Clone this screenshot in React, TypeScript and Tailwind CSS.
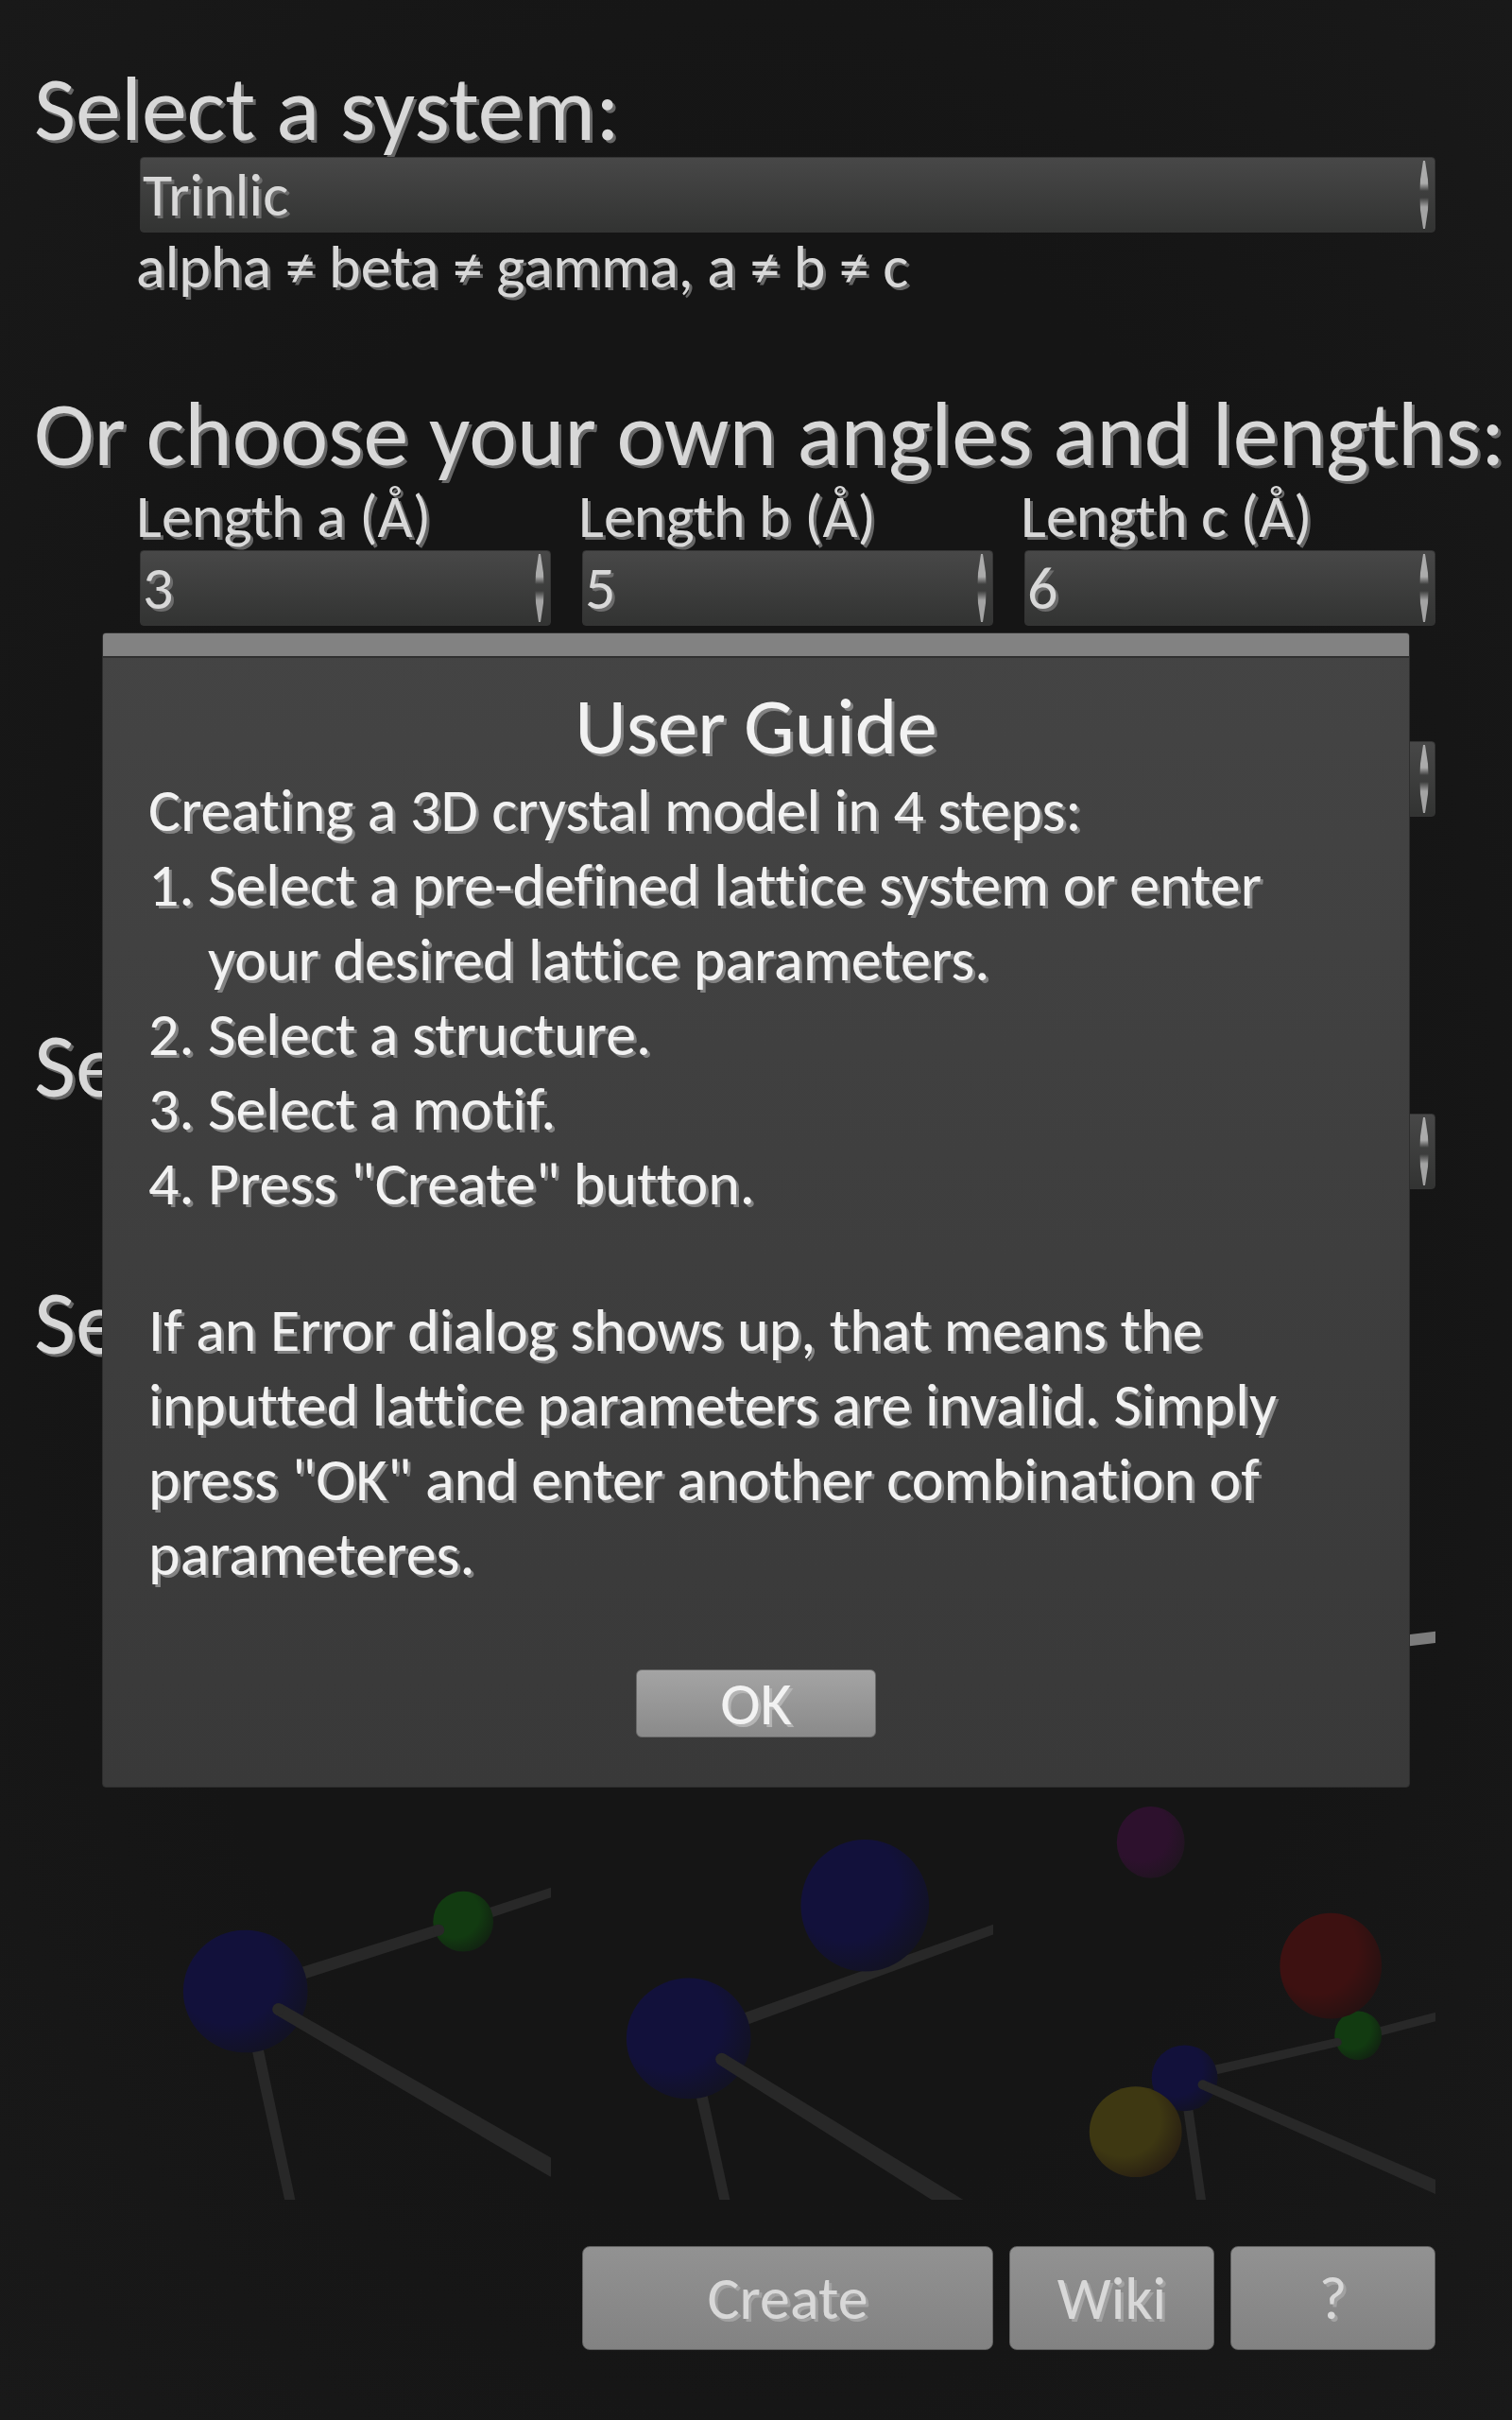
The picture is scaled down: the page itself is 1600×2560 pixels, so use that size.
import type { ReactNode } from 'react'

type Atom = { x: number; y: number; rx: number; ry: number; color: string }
// x, y and thickness at both ends
type Rod = [number, number, number, number, number, number]
type Layer = { atom: Atom } | { rod: Rod; cap?: 'start' | 'end' }

const DIM: Record<string, [string, string]> = {
  blue: ['#12113b', '#121224'],
  green: ['#123b11', '#112411'],
  red: ['#3d1111', '#271111'],
  yellow: ['#3e3812', '#2a2112'],
  purple: ['#2d112d', '#211421'],
}

const BRIGHT: Record<string, [string, string]> = {
  blue: ['#3735b4', '#33336a'],
  green: ['#35b433', '#336a33'],
  red: ['#b93333', '#743333'],
  yellow: ['#bba936', '#7e6336'],
  purple: ['#883388', '#633c63'],
}

const SCENES: Record<string, Layer[]> = {
  single: [
    { rod: [174, 307, 12, 440, 275, 12] },
    { rod: [174, 340, 10, 185, 425, 10] },
    { atom: { x: 170, y: 307, rx: 35, ry: 35, color: 'blue' } },
    { rod: [189, 314, 10, 370, 420, 14], cap: 'start' },
  ],
  pair: [
    { rod: [343, 141, 11, 440, 109, 10] },
    { atom: { x: 343, y: 141, rx: 32, ry: 32, color: 'green' } },
    { rod: [150, 203, 13, 317, 150, 12], cap: 'end' },
    { rod: [124, 272, 12, 160, 440, 11] },
    { atom: { x: 112, y: 215, rx: 66, ry: 65, color: 'blue' } },
    { rod: [147, 234, 13, 440, 404, 18], cap: 'start' },
  ],
  double: [
    { rod: [160, 249, 13, 440, 148, 10] },
    { atom: { x: 300, y: 124, rx: 68, ry: 70, color: 'blue' } },
    { rod: [126, 322, 12, 152, 440, 11] },
    { atom: { x: 113, y: 265, rx: 66, ry: 64, color: 'blue' } },
    { rod: [148, 287, 13, 400, 444, 18], cap: 'start' },
  ],
  complex: [
    { atom: { x: 134, y: 57, rx: 36, ry: 38, color: 'purple' } },
    { rod: [360, 262, 9, 440, 241, 9] },
    { atom: { x: 354, y: 262, rx: 25, ry: 26, color: 'green' } },
    { atom: { x: 325, y: 188, rx: 54, ry: 56, color: 'red' } },
    { rod: [190, 301, 10, 332, 269, 9], cap: 'end' },
    { rod: [173, 335, 10, 188, 440, 10] },
    { atom: { x: 170, y: 307, rx: 35, ry: 35, color: 'blue' } },
    { atom: { x: 118, y: 364, rx: 49, ry: 48, color: 'yellow' } },
    { rod: [189, 314, 10, 440, 424, 14], cap: 'start' },
  ],
}

function rodPoints([x1, y1, w1, x2, y2, w2]: Rod) {
  const len = Math.hypot(x2 - x1, y2 - y1)
  const nx = -(y2 - y1) / len / 2
  const ny = (x2 - x1) / len / 2
  return [
    [x1 + nx * w1, y1 + ny * w1],
    [x2 + nx * w2, y2 + ny * w2],
    [x2 - nx * w2, y2 - ny * w2],
    [x1 - nx * w1, y1 - ny * w1],
  ]
    .map((p) => p.join(','))
    .join(' ')
}

function Preview({ id, scene, label, bright }: { id: string; scene: string; label: string; bright?: boolean }) {
  const palette = bright ? BRIGHT : DIM
  return (
    <button type="button" aria-label={label} className="block w-full">
      <svg viewBox="0 0 436 436" className="block w-full">
        <defs>
          {Object.entries(palette).map(([name, [lit, dark]]) => (
            <radialGradient key={name} id={`${id}-${name}`} cx="0.36" cy="0.36" r="0.68">
              <stop offset="0.6" stopColor={lit} />
              <stop offset="1" stopColor={dark} />
            </radialGradient>
          ))}
        </defs>
        {SCENES[scene].map((layer, i) => {
          if ('atom' in layer) {
            const { x, y, rx, ry, color } = layer.atom
            return <ellipse key={i} cx={x} cy={y} rx={rx} ry={ry} fill={`url(#${id}-${color})`} />
          }
          const [x1, y1, w1, x2, y2, w2] = layer.rod
          return (
            <g key={i} fill={bright ? '#7c7c7c' : '#282828'}>
              <polygon points={rodPoints(layer.rod)} />
              {layer.cap === 'start' && <circle cx={x1} cy={y1} r={w1 / 2} />}
              {layer.cap === 'end' && <circle cx={x2} cy={y2} r={w2 / 2} />}
            </g>
          )
        })}
      </svg>
    </button>
  )
}

function Arrows() {
  return (
    <svg viewBox="0 0 10 72" className="pointer-events-none absolute right-[7px] top-1 h-[72px] w-[10px]" aria-hidden="true">
      <defs>
        <linearGradient id="arrow-up" x1="0" y1="0" x2="0" y2="1">
          <stop offset="0.75" stopColor="#ababab" />
          <stop offset="1" stopColor="#ababab" stopOpacity="0" />
        </linearGradient>
        <linearGradient id="arrow-down" x1="0" y1="1" x2="0" y2="0">
          <stop offset="0.7" stopColor="#a3a3a3" />
          <stop offset="1" stopColor="#a3a3a3" stopOpacity="0" />
        </linearGradient>
      </defs>
      <path d="M4 0h2l3 20 .5 12h-9L1 20z" fill="url(#arrow-up)" />
      <path d="M4 72h2l3-20 .5-13h-9L1 52z" fill="url(#arrow-down)" />
    </svg>
  )
}

function Field({ id, label, options }: { id: string; label?: string; options: string[] }) {
  return (
    <div className="relative">
      <select
        id={id}
        aria-label={label}
        className="block h-20 w-full appearance-none rounded border border-[#343434] bg-linear-to-b from-[#484848] to-[#323332] bg-origin-border pl-[2px] pr-6 leading-[78px] [text-shadow:3px_3px_0_#6c6c6c]"
      >
        {options.map((o) => (
          <option key={o}>{o}</option>
        ))}
      </select>
      <Arrows />
    </div>
  )
}

function LabeledField({ id, label, options }: { id: string; label: string; options: string[] }) {
  return (
    <div>
      <label htmlFor={id} className="-ml-1 block leading-[72px]">{label}</label>
      <Field id={id} options={options} />
    </div>
  )
}

function Heading({ children }: { children: ReactNode }) {
  return <h2 className="pl-9 text-[96px] leading-[100px] whitespace-nowrap">{children}</h2>
}

const actionClass =
  'h-[110px] rounded-lg border border-[#606060] bg-linear-to-b from-[#929292] to-[#828282] [text-shadow:3px_3px_0_#a2a2a2]'

export default function App() {
  return (
    <div className="relative min-h-screen overflow-hidden bg-[#161616] bg-radial from-[#151515] from-60% to-[#191919] font-[Carlito,Calibri,Lato,sans-serif] text-[64px] text-[#d8d8d8] [font-variant-ligatures:none] [text-shadow:3px_3px_0_#666]">
      <main className="pt-[66px] pb-[74px]">
        <Heading>Select a system:</Heading>
        <div className="pl-[148px] pr-[81px]">
          <Field id="system" label="System" options={['Trinlic', 'Monoclinic', 'Orthorhombic', 'Tetragonal', 'Cubic']} />
          <p className="-ml-1 leading-[72px]">alpha ≠ beta ≠ gamma, a ≠ b ≠ c</p>
        </div>

        <div className="mt-[92px]">
          <Heading>Or choose your own angles and lengths:</Heading>
        </div>
        <div className="grid grid-cols-3 gap-x-[33px] gap-y-[50px] pl-[148px] pr-[81px]">
          <LabeledField id="length-a" label="Length a (Å)" options={['3']} />
          <LabeledField id="length-b" label="Length b (Å)" options={['5']} />
          <LabeledField id="length-c" label="Length c (Å)" options={['6']} />
          <LabeledField id="alpha" label="Alpha (°)" options={['60']} />
          <LabeledField id="beta" label="Beta (°)" options={['70']} />
          <LabeledField id="gamma" label="Gamma (°)" options={['80']} />
        </div>

        <div className="mt-[214px]">
          <Heading>Select a structure:</Heading>
        </div>
        <div className="pl-[148px] pr-[81px]">
          <Field id="structure" label="Structure" options={['Simple']} />
        </div>

        <div className="mt-[92px]">
          <Heading>Select a motif:</Heading>
        </div>
        <div className="mt-[7px] grid grid-cols-3 gap-x-[33px] pl-[148px] pr-[81px]">
          <Preview id="m1" scene="single" label="Motif 1" bright />
          <Preview id="m2" scene="single" label="Motif 2" bright />
          <Preview id="m3" scene="single" label="Motif 3" bright />
          <Preview id="m4" scene="pair" label="Motif 4" />
          <Preview id="m5" scene="double" label="Motif 5" />
          <Preview id="m6" scene="complex" label="Motif 6" />
        </div>

        <div className="mt-[49px] grid grid-cols-[451fr_435fr_217fr_217fr] gap-x-[17px] pl-[148px] pr-[81px]">
          <button type="button" className={`${actionClass} col-start-2`}>Create</button>
          <button type="button" className={actionClass}>Wiki</button>
          <button type="button" className={actionClass}>?</button>
        </div>
      </main>

      <div className="absolute inset-0 flex items-center justify-center">
        <section
          role="dialog"
          aria-labelledby="guide-title"
          className="w-[86.5%] overflow-hidden rounded-sm border border-[#2e2e2e] bg-linear-to-b from-[#444] to-[#393939] text-[#f2f2f2] [text-shadow:3px_3px_0_#828282]"
        >
          <div className="h-[26px] border-b-2 border-[#303030] bg-[#828282]" />
          <div className="flex flex-col px-12 pt-[22px] pb-[52px]">
            <h1 id="guide-title" className="text-center text-[85px] leading-[100px]">User Guide</h1>
            <div className="leading-[79px]">
              <p>Creating a 3D crystal model in 4 steps:</p>
              <ol className="pl-[63px] -indent-[63px]">
                <li>1. Select a pre-defined lattice system or enter your desired lattice parameters.</li>
                <li>2. Select a structure.</li>
                <li>3. Select a motif.</li>
                <li>4. Press "Create" button.</li>
              </ol>
              <p className="mt-[76px]">
                If an Error dialog shows up, that means the inputted lattice parameters are invalid. Simply press "OK" and
                enter another combination of parameteres.
              </p>
            </div>
            <button
              type="button"
              className="mt-[82px] h-[72px] w-[254px] self-center rounded-md border border-[#6a6a6a] bg-linear-to-b from-[#a4a4a4] to-[#8a8a8a] leading-none [text-shadow:3px_3px_0_#b4b4b4]"
            >
              OK
            </button>
          </div>
        </section>
      </div>
    </div>
  )
}
